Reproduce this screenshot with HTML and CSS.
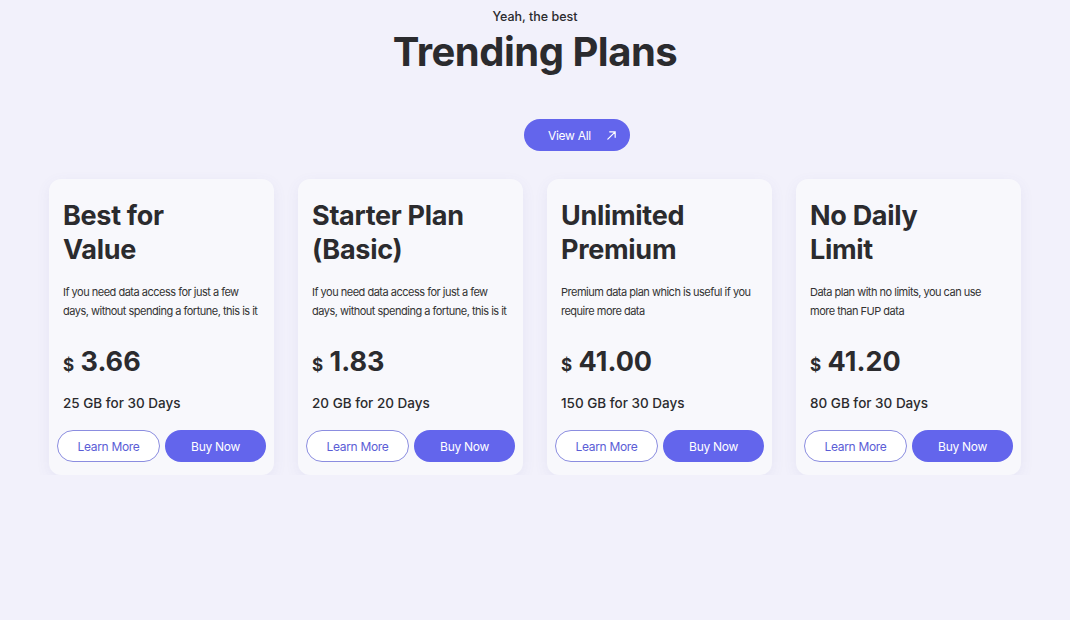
FILE: index.html
```html
<!DOCTYPE html>
<html lang="en">
<head>
<meta charset="UTF-8">
<meta name="viewport" content="width=device-width, initial-scale=1.0">
<title>Trending Plans</title>
<link rel="stylesheet" href="styles.css">
</head>
<body>
<section class="plans">
<p class="eyebrow">Yeah, the best</p>
<h1>Trending Plans</h1>
<a class="view-all" href="#">View All
<svg width="11" height="11" viewBox="0 0 12 12" fill="none" stroke="#fff" stroke-width="1.3" stroke-linecap="round"><path d="M2 10L10 2M4 2h6v6"/></svg>
</a>
<div class="cards">
<div class="card">
<h2>Best for<br>Value</h2>
<p class="desc">If you need data access for just a few days, without spending a fortune, this is it</p>
<p class="price"><span class="cur">$</span> 3.66</p>
<p class="amount">25 GB for 30 Days</p>
<div class="actions"><button class="learn">Learn More</button><button class="buy">Buy Now</button></div>
</div>
<div class="card">
<h2>Starter Plan<br>(Basic)</h2>
<p class="desc">If you need data access for just a few days, without spending a fortune, this is it</p>
<p class="price"><span class="cur">$</span> 1.83</p>
<p class="amount">20 GB for 20 Days</p>
<div class="actions"><button class="learn">Learn More</button><button class="buy">Buy Now</button></div>
</div>
<div class="card">
<h2>Unlimited<br>Premium</h2>
<p class="desc">Premium data plan which is useful if you require more data</p>
<p class="price"><span class="cur">$</span> 41.00</p>
<p class="amount">150 GB for 30 Days</p>
<div class="actions"><button class="learn">Learn More</button><button class="buy">Buy Now</button></div>
</div>
<div class="card">
<h2>No Daily<br>Limit</h2>
<p class="desc">Data plan with no limits, you can use more than FUP data</p>
<p class="price"><span class="cur">$</span> 41.20</p>
<p class="amount">80 GB for 30 Days</p>
<div class="actions"><button class="learn">Learn More</button><button class="buy">Buy Now</button></div>
</div>
</div>
</section>
</body>
</html>
```
FILE: styles.css
```css
body {
    margin: 0;
    background: #f2f1fb;
    font-family: Inter, "Open Sans", sans-serif;
    color: #2b2b2e;
}
.plans {
    display: flex;
    flex-direction: column;
    align-items: center;
    padding-top: 9px;
}
.eyebrow {
    margin: 0;
    font-size: 12.5px;
    line-height: 16px;
    font-weight: 500;
}
h1 {
    margin: 1px 0 0;
    font-size: 40px;
    line-height: 52px;
    font-weight: 700;
    letter-spacing: -0.5px;
}
.view-all {
    margin: 41px 0 0 84px;
    display: flex;
    align-items: center;
    justify-content: space-between;
    width: 106px;
    box-sizing: border-box;
    height: 32px;
    padding: 0 13px 0 24px;
    background: #6365ec;
    color: #fff;
    border-radius: 16px;
    font-size: 12px;
    text-decoration: none;
    letter-spacing: -0.3px;
}
.cards {
    margin-top: 28px;
    display: flex;
    gap: 24px;
}
.card {
    width: 225px;
    box-sizing: border-box;
    padding: 20px 8px 13px;
    background: #f8f8fc;
    border-radius: 12px;
    box-shadow: 0 4px 14px rgba(90, 90, 160, 0.08);
}
.card h2 {
    margin: 0 6px;
    font-size: 27px;
    line-height: 34px;
    font-weight: 700;
    letter-spacing: -0.3px;
}
.desc {
    margin: 16px 0 0 6px;
    width: 196px;
    font-size: 11px;
    line-height: 19px;
    height: 38px;
    letter-spacing: -0.5px;
    color: #333;
}
.price {
    margin: 24px 6px 0;
    font-size: 27px;
    line-height: 34px;
    font-weight: 700;
}
.cur {
    font-size: 17px;
}
.amount {
    margin: 12px 6px 0;
    font-size: 13.5px;
    line-height: 18px;
    font-weight: 500;
}
.actions {
    margin-top: 18px;
    display: flex;
    gap: 5px;
}
.actions button {
    flex: 1;
    height: 32px;
    border-radius: 16px;
    font-family: inherit;
    font-size: 12px;
    letter-spacing: -0.3px;
    cursor: pointer;
}
.learn {
    background: #fff;
    color: #5b5dd6;
    border: 1px solid #8b8de0;
}
.buy {
    background: #6365ec;
    color: #fff;
    border: none;
}
```
